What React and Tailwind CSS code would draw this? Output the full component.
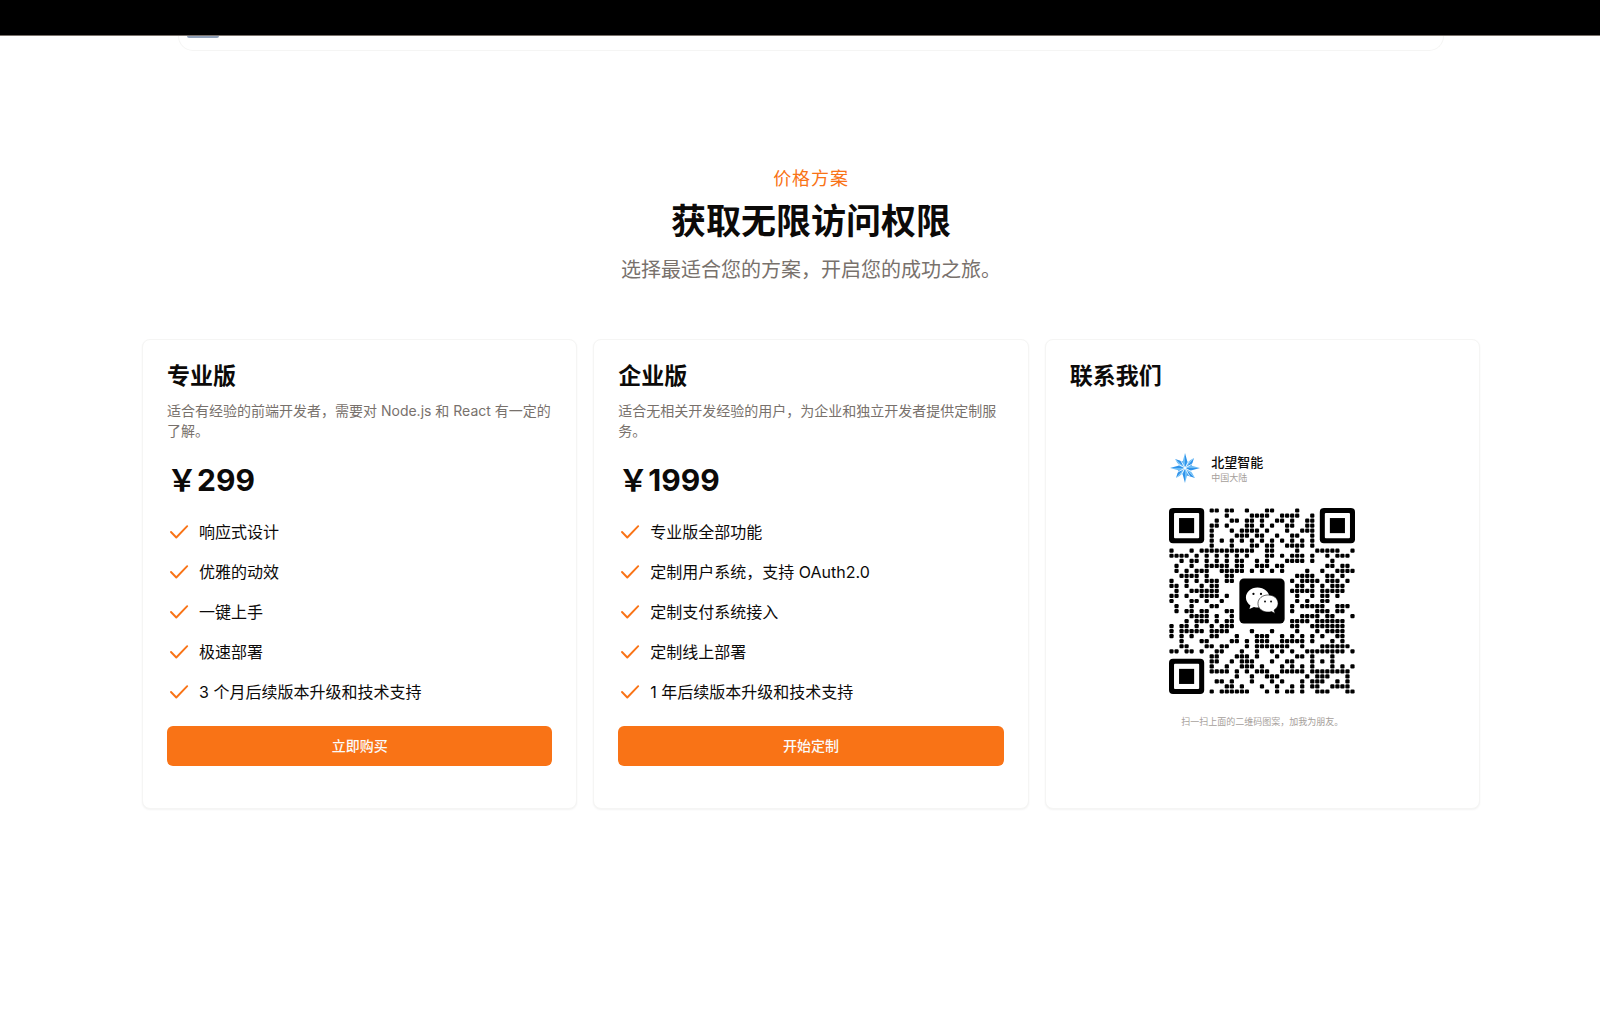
const qrRows = [
  [8, 9, 11, 12, 15, 19, 20, 25],
  [11, 16, 17, 18, 19, 22, 23, 24, 25, 28],
  [9, 12, 13, 15, 16, 18, 21, 22, 24, 27, 28],
  [8, 9, 11, 15, 16, 18, 20, 23, 24, 27, 28],
  [8, 12, 14, 15, 16, 17, 19, 23, 26, 27, 28],
  [8, 13, 14, 15, 17, 18, 21, 24, 25, 28],
  [8, 10, 12, 14, 16, 18, 20, 22, 24, 26, 28],
  [8, 12, 16, 17, 19, 20, 23, 24, 25, 26, 28],
  [0, 4, 6, 7, 8, 9, 10, 11, 12, 13, 14, 15, 16, 19, 20, 25, 29, 30, 31, 32, 33, 36],
  [0, 1, 2, 3, 5, 7, 9, 11, 13, 15, 19, 20, 22, 24, 25, 26, 28, 31, 33, 34, 35],
  [2, 4, 5, 7, 9, 11, 13, 14, 17, 19, 23, 24, 25, 26, 28, 32],
  [1, 4, 7, 8, 9, 10, 11, 13, 14, 17, 18, 19, 21, 22, 31, 32, 34, 35],
  [1, 3, 5, 6, 7, 10, 11, 12, 13, 14, 16, 18, 20, 22, 27, 30, 33, 34, 35, 36],
  [2, 3, 4, 5, 7, 11, 12, 25, 26, 27, 28, 31, 32, 34],
  [0, 3, 5, 7, 8, 9, 11, 12, 24, 26, 27, 28, 29, 31, 32, 33, 35],
  [0, 1, 3, 6, 8, 9, 25, 26, 28, 30, 32, 33, 34],
  [1, 4, 5, 6, 7, 8, 9, 24, 25, 26, 27, 28, 30, 31, 32, 33, 34],
  [0, 1, 3, 6, 7, 8, 9, 11, 25, 28, 30, 31, 33],
  [0, 4, 5, 7, 10, 25, 27, 30, 31],
  [1, 4, 8, 9, 24, 26, 27, 28, 29, 30, 33, 34, 35],
  [1, 3, 4, 6, 7, 11, 12, 24, 29, 30, 31, 33, 34],
  [4, 5, 6, 7, 9, 12, 26, 27, 28, 29, 31, 32, 36],
  [3, 5, 6, 7, 9, 11, 12, 24, 25, 26, 27, 29, 30, 31, 32, 33, 34],
  [0, 2, 3, 5, 8, 10, 11, 12, 24, 25, 28, 29, 30, 31, 32, 33, 34],
  [0, 2, 3, 4, 5, 6, 8, 9, 10, 11, 16, 20, 25, 29, 31, 32, 33, 34],
  [0, 2, 4, 8, 9, 13, 17, 18, 19, 22, 24, 26, 28, 30, 33, 34],
  [2, 6, 7, 12, 13, 15, 17, 18, 19, 22, 23, 24, 25, 26, 28, 32, 34],
  [2, 3, 7, 8, 10, 11, 15, 17, 18, 19, 20, 21, 22, 23, 26, 30, 31, 32, 33, 34, 35],
  [0, 1, 3, 4, 6, 9, 10, 14, 17, 20, 22, 24, 27, 28, 29, 30, 31, 32, 33, 34, 36],
  [8, 9, 13, 14, 15, 17, 21, 25, 26, 28, 32],
  [8, 9, 12, 14, 15, 16, 20, 23, 24, 28, 30, 32],
  [8, 11, 14, 15, 16, 18, 22, 24, 26, 28, 32, 34, 36],
  [8, 9, 10, 11, 13, 15, 17, 18, 19, 22, 23, 24, 25, 26, 28, 29, 30, 31, 32, 33, 34, 35],
  [13, 16, 19, 20, 21, 27, 29, 30, 31, 35],
  [9, 10, 12, 16, 20, 22, 26, 28, 29, 30, 33, 35],
  [11, 12, 14, 18, 21, 24, 26, 28, 29, 32, 33, 34, 35],
  [8, 10, 11, 12, 13, 14, 15, 19, 21, 23, 24, 26, 29, 30, 31, 35, 36],
];

const plans = [
  {
    name: "专业版",
    description: "适合有经验的前端开发者，需要对 Node.js 和 React 有一定的了解。",
    price: "￥299",
    features: ["响应式设计", "优雅的动效", "一键上手", "极速部署", "3 个月后续版本升级和技术支持"],
    action: "立即购买",
  },
  {
    name: "企业版",
    description: "适合无相关开发经验的用户，为企业和独立开发者提供定制服务。",
    price: "￥1999",
    features: [
      "专业版全部功能",
      "定制用户系统，支持 OAuth2.0",
      "定制支付系统接入",
      "定制线上部署",
      "1 年后续版本升级和技术支持",
    ],
    action: "开始定制",
  },
];

function CheckIcon() {
  return (
    <svg
      viewBox="0 0 24 24"
      className="size-6 shrink-0 text-[#f97316]"
      fill="none"
      stroke="currentColor"
      strokeWidth="1.9"
      strokeLinecap="round"
      strokeLinejoin="round"
      aria-hidden="true"
    >
      <path d="M4 12l5.3 5.500L20.200 6.200" />
    </svg>
  );
}

function Card({ title, children }) {
  return (
    <section className="flex flex-col rounded-lg border border-stone-100 bg-white px-6 pt-6 pb-[42px] shadow-xs">
      <h3 className="text-[23px] leading-6 font-bold">{title}</h3>
      {children}
    </section>
  );
}

function PlanCard({ plan }) {
  return (
    <Card title={plan.name}>
      <p className="mt-[13px] text-sm text-[#78716c]">{plan.description}</p>
      <p className="mt-[21px] text-[30px] leading-9 font-bold">{plan.price}</p>
      <ul className="mt-[22px] flex flex-col gap-4">
        {plan.features.map((feature) => (
          <li key={feature} className="flex items-center gap-2 text-base leading-6">
            <CheckIcon />
            {feature}
          </li>
        ))}
      </ul>
      <button
        type="button"
        className="mt-[22px] h-10 w-full rounded-md bg-[#f97316] text-sm font-medium text-stone-50"
      >
        {plan.action}
      </button>
    </Card>
  );
}

function Finder({ x, y }) {
  return (
    <g>
      <rect x={x} y={y} width="7" height="7" rx="0.8" />
      <rect x={x + 1} y={y + 1} width="5" height="5" rx="0.2" fill="#fff" />
      <rect x={x + 2} y={y + 2} width="3" height="3" />
    </g>
  );
}

function QrCode() {
  return (
    <svg viewBox="0 0 37 37" className="size-[186px]" role="img" aria-label="微信二维码">
      {qrRows.map((cols, row) =>
        cols.map((col) => (
          <rect key={row + "-" + col} x={col + 0.08} y={row + 0.08} width="0.84" height="0.84" rx="0.25" />
        ))
      )}
      <Finder x={0} y={0} />
      <Finder x={30} y={0} />
      <Finder x={0} y={30} />
      <rect x="14" y="14" width="9" height="9" rx="0.9" />
      <g transform="translate(0 -0.3)">
        <path
          fill="#fff"
          d="M17.600 16.100c-1.300 0-2.300.9-2.300 2 0 .7.4 1.200.9 1.600l-.2.7.9-.4c.3.1.5.1.8.1 1.200 0 2.300-.9 2.300-2s-1.100-2-2.400-2z"
        />
        <path
          fill="#fff"
          stroke="#000"
          strokeWidth="0.12"
          d="M19.700 17.600c-1.100 0-2 .7-2 1.700s.9 1.700 2 1.700c.3 0 .5 0 .7-.1l.7.4-.2-.7c.5-.3.8-.8.8-1.300 0-1-.9-1.700-2-1.700z"
        />
        <circle cx="16.8" cy="17.4" r="0.22" />
        <circle cx="18.3" cy="17.4" r="0.22" />
        <circle cx="19.1" cy="18.900" r="0.18" />
        <circle cx="20.3" cy="18.900" r="0.18" />
      </g>
    </svg>
  );
}

function StarLogo() {
  return (
    <svg viewBox="0 0 32 32" className="size-8" aria-hidden="true">
      <g fill="#2f93ea">
        <path d="M16 1l3 11-3 4zM31 16l-11 3-4-3zM16 31l-3-11 3-4zM1 16l11-3 4 3z" />
        <path d="M25 6l-2.500 8L16 16zM26 26l-8-2.500L16 16zM7 26l2.500-8L16 16zM6 7l8 2.500L16 16z" />
      </g>
      <g fill="#6dbdf6">
        <path d="M16 1l-3 11 3 4zM31 16l-11-3-4 3zM16 31l3-11-3-4zM1 16l11 3 4-3z" />
        <path d="M25 6l-7 4L16 16zM26 26l-4-7L16 16zM7 26l7-4L16 16zM6 7l4 7L16 16z" />
      </g>
      <g stroke="#fff" strokeWidth="0.8">
        <path d="M11.500 8l9 16M20.500 8l-9 16M8 11.500l16 9M24 11.500l-16 9" />
      </g>
    </svg>
  );
}

export default function App() {
  return (
    <div className="min-h-screen bg-white font-['Inter','Noto_Sans_CJK_SC',sans-serif] text-stone-950">
      <div className="h-9 border-b border-stone-500 bg-black" />
      <div className="pl-[22px]">
        <header className="mx-auto h-[15px] max-w-[1266px] rounded-b-2xl border border-t-0 border-stone-100 px-2">
          <div className="h-[2px] w-8 rounded-b-md bg-slate-400" />
        </header>
        <main className="mx-auto max-w-[1338px] pt-[116px] pb-16" lang="zh-CN">
          <div className="flex flex-col items-center text-center">
            <p className="text-lg leading-6 tracking-wider text-[#f97316]">价格方案</p>
            <h2 className="mt-2.5 text-[35px] leading-10 font-bold">获取无限访问权限</h2>
            <p className="mt-[15px] text-xl leading-7 text-[#78716c]">选择最适合您的方案，开启您的成功之旅。</p>
          </div>
          <div className="mt-[55px] grid grid-cols-3 gap-4">
            {plans.map((plan) => (
              <PlanCard key={plan.name} plan={plan} />
            ))}
            <Card title="联系我们">
              <figure className="mx-auto mt-16 flex w-[186px] flex-col">
                <div className="flex items-center gap-2.5">
                  <StarLogo />
                  <div>
                    <p className="text-[13px] leading-5 font-medium">北望智能</p>
                    <p className="text-[9px] leading-3 text-stone-400">中国大陆</p>
                  </div>
                </div>
                <div className="mt-6">
                  <QrCode />
                </div>
                <figcaption className="mt-5 text-center text-[9px] leading-4 text-stone-400">
                  扫一扫上面的二维码图案，加我为朋友。
                </figcaption>
              </figure>
            </Card>
          </div>
        </main>
      </div>
    </div>
  );
}
